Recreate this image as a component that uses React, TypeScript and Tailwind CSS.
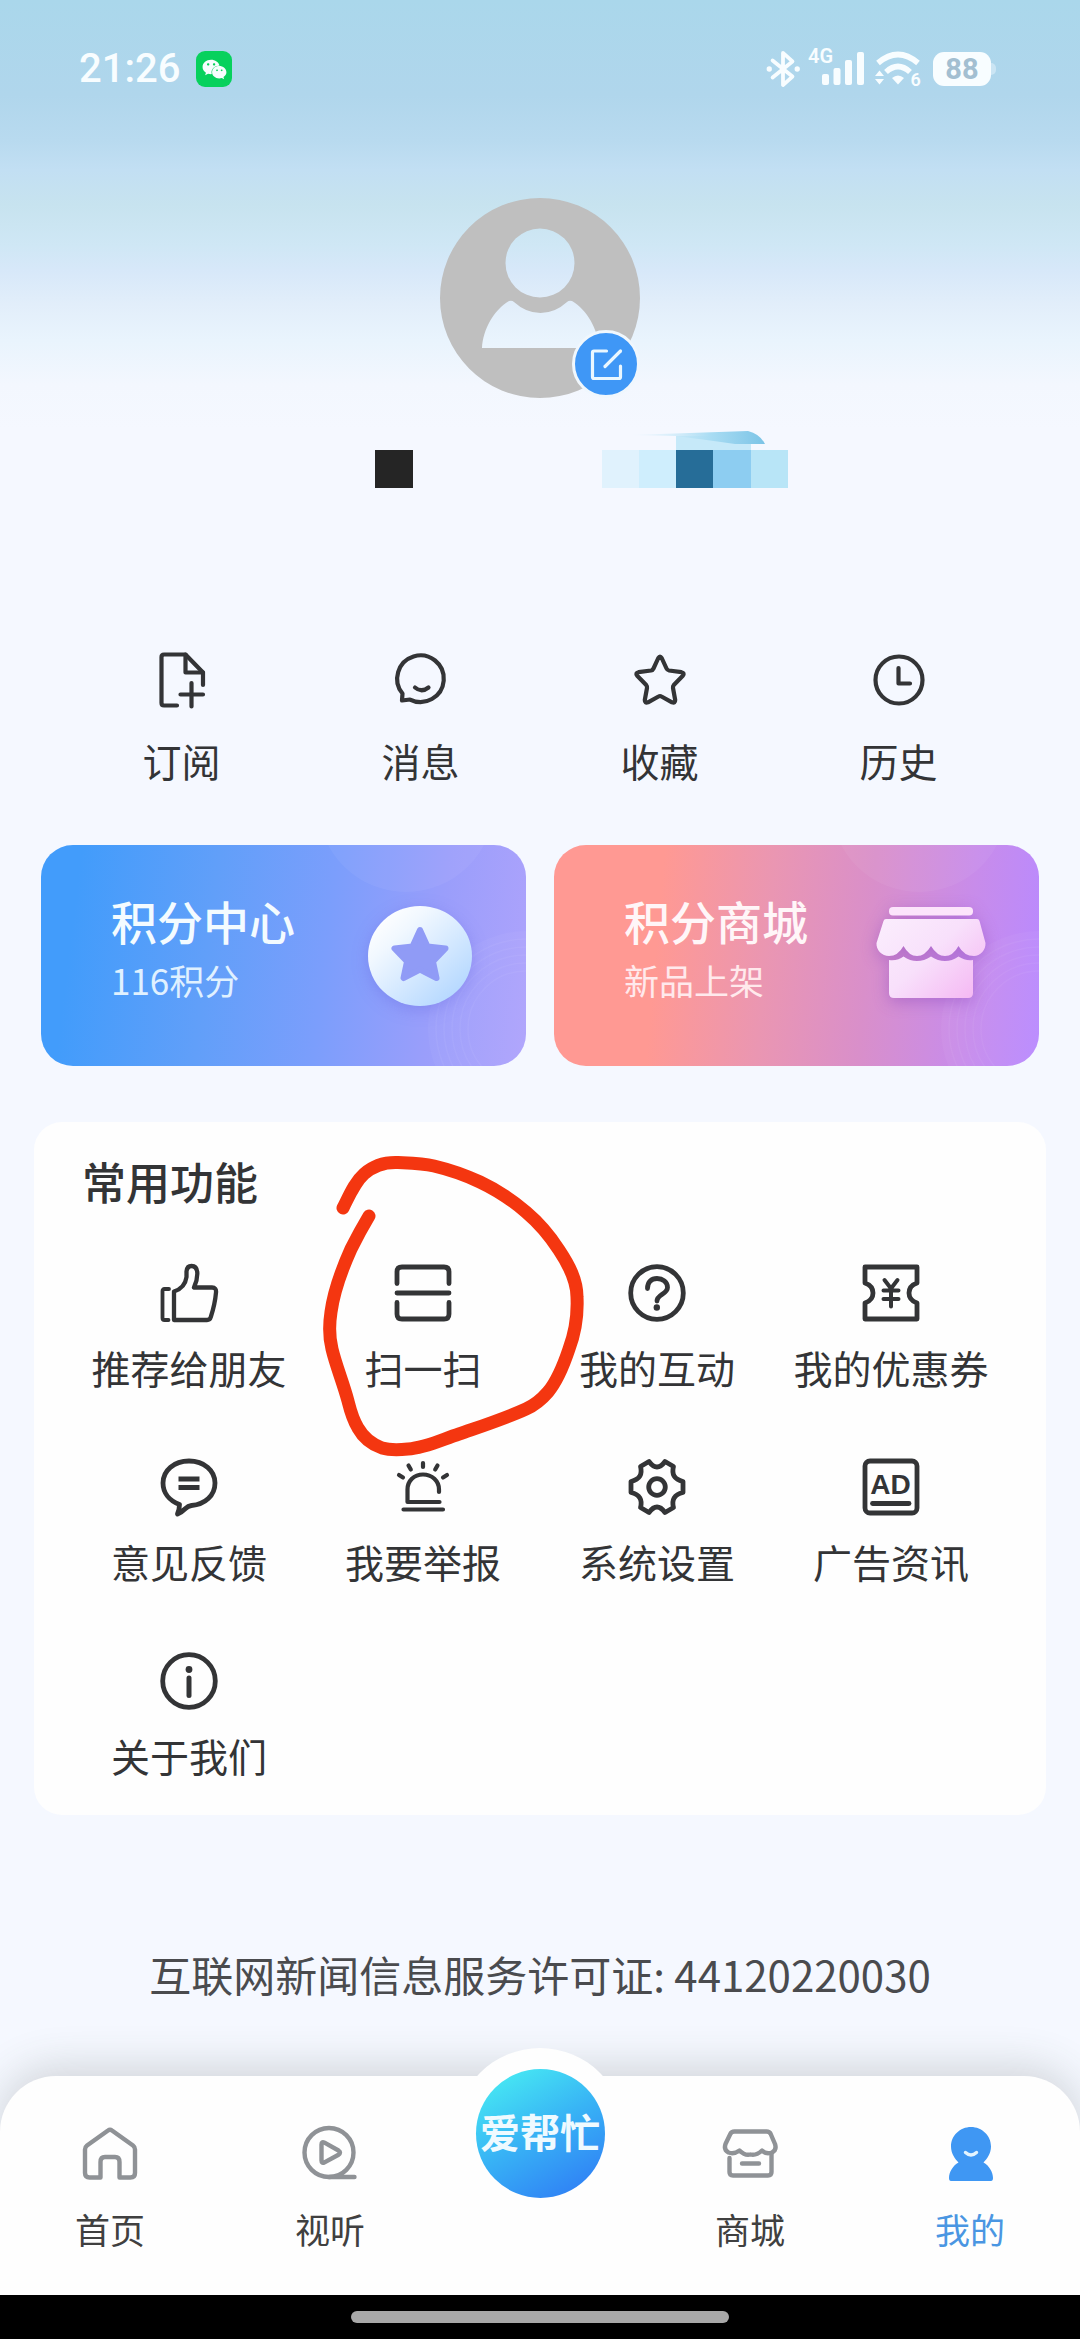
import type { ReactNode } from "react";
import { FaWeixin } from "react-icons/fa";

type Item = { label: string; icon: ReactNode };

/* ------------------------------ Icon wrapper ------------------------------ */
function LineIcon({ children, thin }: { children: ReactNode; thin?: boolean }) {
  return (
    <svg
      viewBox="0 0 60 60"
      className="size-[60px] overflow-visible"
      fill="none"
      stroke="currentColor"
      strokeWidth={thin ? 4.2 : 4.8}
      strokeLinecap="round"
      strokeLinejoin="round"
      aria-hidden="true"
    >
      {children}
    </svg>
  );
}

function NavIcon({ children }: { children: ReactNode }) {
  return (
    <svg
      viewBox="0 0 56 56"
      className="size-14 text-[#8f9296]"
      fill="none"
      stroke="currentColor"
      strokeWidth={4.4}
      strokeLinecap="round"
      strokeLinejoin="round"
      aria-hidden="true"
    >
      {children}
    </svg>
  );
}

/* ---------------------------------- Data ---------------------------------- */
const shortcuts: Item[] = [
  {
    label: "订阅",
    icon: (
      <LineIcon thin>
        <path d="M25 55.5H12q-2.500 0-2.500-2.500V7q0-2.500 2.500-2.500H33.500L51 22.500V35" />
        <path d="M33.500 4.500V22.500H51" />
        <path d="M39.500 33V56.500M28.500 44.500H51" />
      </LineIcon>
    ),
  },
  {
    label: "消息",
    icon: (
      <LineIcon thin>
        <path d="M19 49.500L11 50.500L11.500 43.500A23.300 23.300 0 1 1 19 49.500Z" />
        <path d="M24 37.500Q30.500 43 37.500 37.500" />
      </LineIcon>
    ),
  },
  {
    label: "收藏",
    icon: (
      <LineIcon thin>
        <path
          d="M28.300 8Q30 5 31.700 8L36.500 18.500Q37.300 20.200 39 20.500L51.500 22.200Q55 23 52.800 25.800L43.800 35Q42.800 36.300 43 38L45.200 50Q45.300 53.500 42 52.300L31.500 46.500Q30 45.600 28.500 46.500L18 52.300Q14.700 53.500 14.800 50L17 38Q17.200 36.300 16.200 35L7.200 25.800Q5 23 8.500 22.200L21 20.500Q22.700 20.200 23.500 18.500Z"
        />
      </LineIcon>
    ),
  },
  {
    label: "历史",
    icon: (
      <LineIcon thin>
        <circle cx="30" cy="30" r="23.500" />
        <path d="M29.500 18V33.500H41" />
      </LineIcon>
    ),
  },
];

const features: Item[] = [
  {
    label: "推荐给朋友",
    icon: (
      <LineIcon>
        <path d="M10 26H5.500Q3.500 26 3.500 28V55Q3.500 57 5.500 57H9.500" strokeWidth={3.800} />
        <path d="M15 57V28.500Q26 25 27.500 14V8.500Q28 3 32.500 3Q38 3 38.300 10Q38.500 17 35 24.500H53Q57.500 24.500 57 29.500Q56 41 51.800 54Q51 57 48 57Z" strokeWidth={4.300} />
      </LineIcon>
    ),
  },
  {
    label: "扫一扫",
    icon: (
      <LineIcon>
        <path d="M4 20.500V9Q4 4 9 4H51Q56 4 56 9V20.500M4 39.500V51Q4 56 9 56H51Q56 56 56 51V39.500M4 30H56" />
      </LineIcon>
    ),
  },
  {
    label: "我的互动",
    icon: (
      <LineIcon>
        <circle cx="30" cy="30" r="26.300" />
        <path d="M20.500 25.500C20.500 19 24.500 15.500 30 15.500S40.500 19 40.500 24.500C40.500 31 30 31.500 30 38" />
        <circle cx="29.800" cy="44.500" r="3.200" fill="currentColor" stroke="none" />
      </LineIcon>
    ),
  },
  {
    label: "我的优惠券",
    icon: (
      <LineIcon>
        <path d="M4 4H56V20C50.500 22 48 26 48 30S50.500 38 56 40V56H4V40C9.500 38 12 34 12 30S9.500 22 4 20Z" />
        <path d="M23.500 17L30 25.500L36.500 17M30 25.500V43.500M22.500 27.500H37.500M22.500 36H37.500" strokeWidth={4} />
      </LineIcon>
    ),
  },
  {
    label: "意见反馈",
    icon: (
      <LineIcon>
        <path d="M20.500 47.500C10 43.500 4 35.500 4 26C4 13.500 15 4 30 4S56 13.500 56 26S46 47.500 32.500 48.500Q29 49 26.500 51.500Q23 55 18.500 57Q20.500 52 20.500 47.500Z" />
        <path d="M19.500 22H40.500M19.500 30.500H40.500" strokeLinecap="butt" strokeWidth={5} />
      </LineIcon>
    ),
  },
  {
    label: "我要举报",
    icon: (
      <LineIcon thin>
        <path d="M46 35V32.500C46 24 39 17.500 30 17.500S14.500 24 14.500 32.500V45H46.500M10.500 52.500H50" />
        <path d="M30 6V10M15.500 8.500L17.800 12.500M44.500 8.500L42.200 12.500M6 18L10 20.500M54 18L50 20.500" />
      </LineIcon>
    ),
  },
  {
    label: "系统设置",
    icon: (
      <LineIcon>
        <path d="M22 4.500Q26 10 30 10T38 4.500L46.500 9.500C44.500 17 47 22.500 56 24.500V35.500C47 37.500 44.500 43 46.500 50.500L38 55.500Q34 50 30 50T22 55.500L13.500 50.500C15.500 43 13 37.500 4 35.500V24.500C13 22.500 15.500 17 13.500 9.500Z" />
        <circle cx="30" cy="30" r="8.300" />
      </LineIcon>
    ),
  },
  {
    label: "广告资讯",
    icon: (
      <LineIcon>
        <rect x="4" y="4" width="52" height="52" rx="5" />
        <path d="M11.500 46.500H48" />
        <text x="29.500" y="36.500" textAnchor="middle" fontSize="28" fontWeight="700" fontFamily="'Liberation Sans', sans-serif" fill="currentColor" stroke="none">
          AD
        </text>
      </LineIcon>
    ),
  },
  {
    label: "关于我们",
    icon: (
      <LineIcon>
        <circle cx="30" cy="30" r="26.300" />
        <circle cx="30" cy="18.500" r="3.400" fill="currentColor" stroke="none" />
        <path d="M30 27V44.500" strokeWidth={5} />
      </LineIcon>
    ),
  },
];

/* ------------------------------- Status bar ------------------------------- */
function StatusBar() {
  return (
    <div className="flex items-center justify-between pt-[45px] pl-[79px] pr-[84px] text-[#f8fdff]">
      <div className="flex items-center gap-4 h-12">
        <span className="text-[40px] leading-[48px] font-medium font-['Roboto',sans-serif]">21:26</span>
        <span className="flex items-center justify-center size-[36px] rounded-[9px] bg-[#07d15d]">
          <FaWeixin className="size-[25px]" />
        </span>
      </div>
      <div className="flex items-center gap-[10px]">
        <svg viewBox="-1 -1 38 42" className="w-[36px] h-[40px]" fill="none" stroke="currentColor" strokeWidth="4" strokeLinejoin="round" strokeLinecap="round" aria-hidden="true">
          <path d="M7 11L28 28L18 37V3L28 12L7 29" />
          <circle cx="3.500" cy="20" r="2.800" fill="currentColor" stroke="none" />
          <circle cx="33" cy="20" r="2.800" fill="currentColor" stroke="none" />
        </svg>
        <svg viewBox="0 0 54 40" className="w-[54px] h-[40px] overflow-visible" fill="currentColor" aria-hidden="true">
          <text x="-3" y="14" fontSize="20" fontWeight="600" fontFamily="Roboto, sans-serif">4G</text>
          <rect x="11" y="25" width="7" height="11" rx="2" />
          <rect x="22.500" y="19" width="7" height="17" rx="2" />
          <rect x="34" y="11" width="7" height="25" rx="2" />
          <rect x="46" y="3" width="7" height="33" rx="2" />
        </svg>
        <svg viewBox="0 0 46 40" className="w-[46px] h-[40px]" fill="none" stroke="currentColor" strokeWidth="5.600" aria-hidden="true">
          <path d="M3 14Q23 -3 43 14" />
          <path d="M11 23Q23 12 35 23" />
          <path d="M17 29Q23 24 29 29L23 35.500Z" fill="currentColor" stroke="none" />
          <path d="M0 27L4.500 21.500L9 27ZM0 30L4.500 35.500L9 30Z" fill="currentColor" stroke="none" />
          <text x="35.500" y="37" fontSize="18" fontWeight="600" fontFamily="Roboto, sans-serif" fill="currentColor" stroke="none">6</text>
        </svg>
        <div className="flex items-center ml-[2px]">
          <span className="flex items-center justify-center w-[58px] h-[34px] rounded-[11px] bg-[#f8fdff] text-[29px] leading-[34px] font-bold text-[#a3bfd1] font-['Roboto',sans-serif]">
            88
          </span>
          <span className="w-[5px] h-3 rounded-r-full bg-[#cbe5f4]" />
        </div>
      </div>
    </div>
  );
}

/* --------------------------------- Profile -------------------------------- */
function Profile() {
  return (
    <div className="flex flex-col items-center mt-[105px]">
      <div className="relative">
        <svg viewBox="0 0 200 200" className="size-[200px]" aria-hidden="true">
          <path
            fill="#bfbfbf"
            fillRule="evenodd"
            d="M100 0A100 100 0 1 1 100 200A100 100 0 1 1 100 0ZM100 30.500A34.500 34.500 0 1 0 100 99.500A34.500 34.500 0 1 0 100 30.500ZM42 150C43 131 54 112 69 103Q72 102 74 104Q86 115 100.500 115T127 104Q129 102 132 103C147 112 158 131 159 150Z"
          />
        </svg>
        <button
          type="button"
          aria-label="编辑资料"
          className="absolute right-0 bottom-0 flex items-center justify-center size-[68px] rounded-full border-[3px] border-[#f0f7fd] bg-[#3f97f6]"
        >
          <svg viewBox="0 0 33 33" className="size-[33px]" fill="none" stroke="#eaf7ff" strokeWidth="3.200" strokeLinecap="round" strokeLinejoin="round">
            <path d="M16.500 3H4Q2.500 3 2.500 4.500V29Q2.500 30.500 4 30.500H29Q30.500 30.500 30.500 29V18" />
            <path d="M30.500 3L15 18.500" />
          </svg>
        </button>
      </div>
      {/* masked nickname */}
      <svg viewBox="0 0 500 58" className="w-[500px] h-[58px] mt-8" aria-hidden="true">
        <defs>
          <linearGradient id="swoosh" x1="0" x2="1" y1="0" y2="0">
            <stop offset="0" stopColor="#e4f4fd" stopOpacity="0.200" />
            <stop offset="0.600" stopColor="#a9dcf3" />
            <stop offset="1" stopColor="#7cc4e6" />
          </linearGradient>
        </defs>
        <rect x="386" y="6" width="75" height="15" fill="#c6e9f9" />
        <path d="M340 5Q400 3 458 1Q470 4 475 14L445 14Q410 9 386 6Z" fill="url(#swoosh)" />
        <rect x="85" y="20" width="38" height="38" fill="#252525" />
        <rect x="312" y="20" width="37" height="38" fill="#e0f2fd" />
        <rect x="349" y="20" width="37" height="38" fill="#cfeefd" />
        <rect x="386" y="20" width="37" height="38" fill="#266d98" />
        <rect x="423" y="20" width="38" height="38" fill="#8dcdf1" />
        <rect x="461" y="20" width="37" height="38" fill="#b8e5f7" />
      </svg>
    </div>
  );
}

/* ------------------------------ Points cards ------------------------------ */
function CardDecor() {
  return (
    <svg viewBox="0 0 485 221" preserveAspectRatio="xMaxYMid slice" className="absolute inset-0 size-full" fill="none" aria-hidden="true">
      <circle cx="365" cy="-41" r="88" fill="#fff" fillOpacity="0.050" />
      <circle cx="485" cy="184" r="98" fill="#fff" fillOpacity="0.040" />
      <g stroke="#fff" strokeOpacity="0.050" strokeWidth="1.500">
        <circle cx="485" cy="184" r="90" />
        <circle cx="485" cy="184" r="82" />
        <circle cx="485" cy="184" r="74" />
        <circle cx="485" cy="184" r="66" />
        <circle cx="485" cy="184" r="58" />
      </g>
    </svg>
  );
}

function StarBadge() {
  return (
    <svg viewBox="0 0 110 100" className="w-[110px] h-[100px] overflow-visible drop-shadow-[0_4px_8px_rgba(90,90,220,0.3)]" aria-hidden="true">
      <defs>
        <linearGradient id="badge" x1="0.100" x2="0.850" y1="0.100" y2="0.900">
          <stop offset="0" stopColor="#ffffff" />
          <stop offset="0.250" stopColor="#f1f8ff" />
          <stop offset="1" stopColor="#b5d8ff" />
        </linearGradient>
      </defs>
      <ellipse cx="55" cy="50" rx="52" ry="50" fill="url(#badge)" />
      <path
        d="M55 24L62.500 40.500L80.500 42.500L68 55.500L71.500 72L55 63.500L38.500 72L42 55.500L29.500 42.500L47.500 40.500Z"
        fill="#909bf6"
        stroke="#909bf6"
        strokeWidth="6"
        strokeLinejoin="round"
      />
    </svg>
  );
}

function ShopBadge() {
  return (
    <svg viewBox="0 0 110 100" className="w-[110px] h-[100px] overflow-visible drop-shadow-[0_4px_8px_rgba(130,60,180,0.4)]" aria-hidden="true">
      <defs>
        <linearGradient id="shop" gradientUnits="userSpaceOnUse" x1="10" x2="95" y1="5" y2="95">
          <stop offset="0" stopColor="#fbeefd" />
          <stop offset="0.500" stopColor="#f8e0fb" />
          <stop offset="1" stopColor="#f5b8f3" />
        </linearGradient>
      </defs>
      <rect x="13" y="1" width="84" height="8.500" rx="4" fill="#fce4fb" />
      <path d="M10 13H101Q103 13 103.500 15L109.500 37C110 44 104 50 98 50Q88 50 82.500 40Q77 50 69 50T55 40Q49 50 41 50T27.500 40Q22 50 13 50C6 50 0 44 .5 37L7.500 15Q8 13 10 13Z" fill="url(#shop)" />
      <path d="M13 54Q22 55 27.500 50.500Q34 55 41 55T55 50.500Q62 55 69 55T82.500 50.500Q89 55 97 54V87Q97 92 92 92H18Q13 92 13 87Z" fill="url(#shop)" />
    </svg>
  );
}

/* ------------------------------- Bottom nav ------------------------------- */
function BottomNav() {
  const item = "flex flex-1 flex-col items-center gap-6 pt-[49px] text-[35px] leading-[48px] text-[#404040]";
  return (
    <nav className="relative mt-auto flex h-[219px] rounded-t-[56px] bg-[#fefefe] shadow-[0_-8px_44px_rgba(60,70,60,0.2)]">
      <a href="#home" className={item}>
        <NavIcon>
          <path d="M26 5.500Q28 4 30 5.500L51 20.500Q53 22 53 24.500V48Q53 52.500 48.500 52.500H37.500V37Q37.500 32 33 32H23Q18.500 32 18.500 37V52.500H7.500Q3 52.500 3 48V24.500Q3 22 5 20.500Z" />
        </NavIcon>
        首页
      </a>
      <a href="#video" className={item}>
        <NavIcon>
          <circle cx="27" cy="27.500" r="24.500" />
          <path d="M27 52H52.500M19.500 19.500V35.500Q19.500 39 22.500 37.300L36.500 29.700Q39.500 27.500 36.500 25.500L22.500 17.700Q19.500 16 19.500 19.500Z" />
        </NavIcon>
        视听
      </a>
      <div className="flex w-[200px] justify-center">
        <a
          href="#help"
          className="-mt-7 flex size-[170px] items-center justify-center rounded-full bg-[#fefefe]"
        >
          <span className="flex size-[129px] items-center justify-center rounded-full bg-[linear-gradient(150deg,#47eaf3_8%,#38b4f5_48%,#2f7ff5_92%)] pb-1 text-[40px] leading-[48px] font-bold whitespace-nowrap text-[#effaff]">
            爱帮忙
          </span>
        </a>
      </div>
      <a href="#mall" className={item}>
        <NavIcon>
          <path d="M12.500 6.500H44.500Q47.500 6.500 48.700 9L53 19Q55 25 50 27.500Q44 29.500 40 25.500Q34 31 28.500 29.500Q23 31 17.500 25.500Q12 29.500 6.500 27.500Q1.500 25 3.500 19L8.300 9Q9.500 6.500 12.500 6.500Z" />
          <path d="M7.500 33V47Q7.500 50.500 11 50.500H46Q49.500 50.500 49.500 47V29M20 38.500H37" />
        </NavIcon>
        商城
      </a>
      <a href="#me" aria-current="page" className={item}>
        <svg viewBox="0 0 56 56" className="size-14" aria-hidden="true">
          <path
            fill="#3f97f3"
            d="M29 2C40 2 49 10.500 49 21.500C49 28.500 45 34 41.500 37.500C47 40.500 51 47 51 53Q51 56 49 56H9Q7 56 7 53C7 47 11 40.500 16.500 37.500C13 34 9 28.500 9 21.500C9 10.500 18 2 29 2Z"
          />
          <path d="M23.500 27.500Q29 32.500 34.500 27.500" fill="none" stroke="#e3f4ff" strokeWidth="3.400" strokeLinecap="round" />
        </svg>
        <span className="text-[#4a96e2]">我的</span>
      </a>
    </nav>
  );
}

/* ----------------------------- Red marker loop ---------------------------- */
function MarkerLoop() {
  return (
    <svg
      viewBox="0 0 320 360"
      className="pointer-events-none absolute top-1/2 left-1/2 z-10 h-[360px] w-[320px] -translate-x-1/2 -translate-y-1/2 overflow-visible"
      fill="none"
      stroke="#f43610"
      strokeWidth="13"
      strokeLinecap="round"
      strokeLinejoin="round"
      aria-hidden="true"
    >
      <path d="M80 61C87 47 92 35 101 27C111 18 123 15 135 15.500C148 16 159 16 171 19C188 23 202 28 217 35C234 43 249 53 263 65C276 76 287 89 296 103C306 118 314 133 314 150C315 170 312 186 306 202C301 217 295 233 285 245C279 252 272 258 263 262C241 272 219 279 196 287C178 293 162 301 145 302C135 303 126 303 119 301C108 297 100 290 95 281C89 271 87 262 85 254C80 235 73 219 69 202C66 190 66 178 68 165C71 143 79 122 88 102C94 90 100 79 106 69" />
    </svg>
  );
}

function App() {
  return (
    <div className="flex min-h-screen flex-col bg-[#f5f8ff] bg-[linear-gradient(180deg,#aad7eb_0px,#b0d6ec_95px,#b8daef_140px,#c2dff3_170px,#c7e3ef_205px,#cfe7f5_245px,#d7e8f9_270px,#e2eefa_305px,#e9f4fd_340px,#f3f7fe_385px,#f5f8ff_430px)] font-['Noto_Sans_CJK_SC',sans-serif] text-[#333436]">
      <StatusBar />
      <Profile />

      {/* ------------------------------ Shortcuts ------------------------------ */}
      <div className="mt-[162px] grid grid-cols-4 px-[62px]">
        {shortcuts.map((s) => (
          <button key={s.label} type="button" className="flex flex-col items-center gap-[26px] text-[39px] leading-[48px]">
            {s.icon}
            {s.label}
          </button>
        ))}
      </div>

      {/* -------------------------------- Points -------------------------------- */}
      <div className="mt-[61px] grid grid-cols-2 gap-7 px-[41px]">
        <a href="#points" className="relative flex h-[221px] items-center justify-between overflow-hidden rounded-[32px] bg-[linear-gradient(97deg,#429cfb_8%,#619ff9_35%,#7b9efc_58%,#9a9efb_80%,#aea3fc_100%)] pr-[51px] pl-[70px] text-[#f3fbff]">
          <CardDecor />
          <div className="relative flex flex-col gap-2 pb-4">
            <span className="text-[46px] leading-[56px] font-medium">积分中心</span>
            <span className="text-[35px] leading-[48px] text-[#e0f1ff]">116积分</span>
          </div>
          <div className="relative">
            <StarBadge />
          </div>
        </a>
        <a href="#points-mall" className="relative flex h-[221px] items-center justify-between overflow-hidden rounded-[32px] bg-[linear-gradient(95deg,#ff9993_22%,#ea96b2_44%,#d98fca_64%,#c88cea_84%,#b98aff_100%)] pr-[53px] pl-[70px] text-[#fff6f8]">
          <CardDecor />
          <div className="relative flex flex-col gap-2 pb-4">
            <span className="text-[46px] leading-[56px] font-medium">积分商城</span>
            <span className="text-[35px] leading-[48px] text-[#ffe9ec]">新品上架</span>
          </div>
          <div className="relative">
            <ShopBadge />
          </div>
        </a>
      </div>

      {/* ------------------------------- Features ------------------------------- */}
      <section className="mx-[34px] mt-14 rounded-[28px] bg-[#fefefe] px-[38px] pt-[31px] pb-9">
        <h2 className="pl-[10px] text-[44px] leading-[56px] font-medium">常用功能</h2>
        <div className="mt-[54px] grid grid-cols-4 gap-y-[66px]">
          {features.map((f) => (
            <button key={f.label} type="button" className="relative flex flex-col items-center gap-5 text-[39px] leading-[48px] whitespace-nowrap">
              {f.icon}
              {f.label}
              {f.label === "扫一扫" && <MarkerLoop />}
            </button>
          ))}
        </div>
      </section>

      <p className="mt-[131px] mb-[72px] text-center text-[42px] leading-[56px] text-[#4a4b4e]">
        互联网新闻信息服务许可证: 44120220030
      </p>

      <BottomNav />
      <div className="relative flex h-11 items-center justify-center bg-black">
        <span className="h-3 w-[378px] rounded-full bg-[#a8a8a8]" />
      </div>
    </div>
  );
}

export default App;
